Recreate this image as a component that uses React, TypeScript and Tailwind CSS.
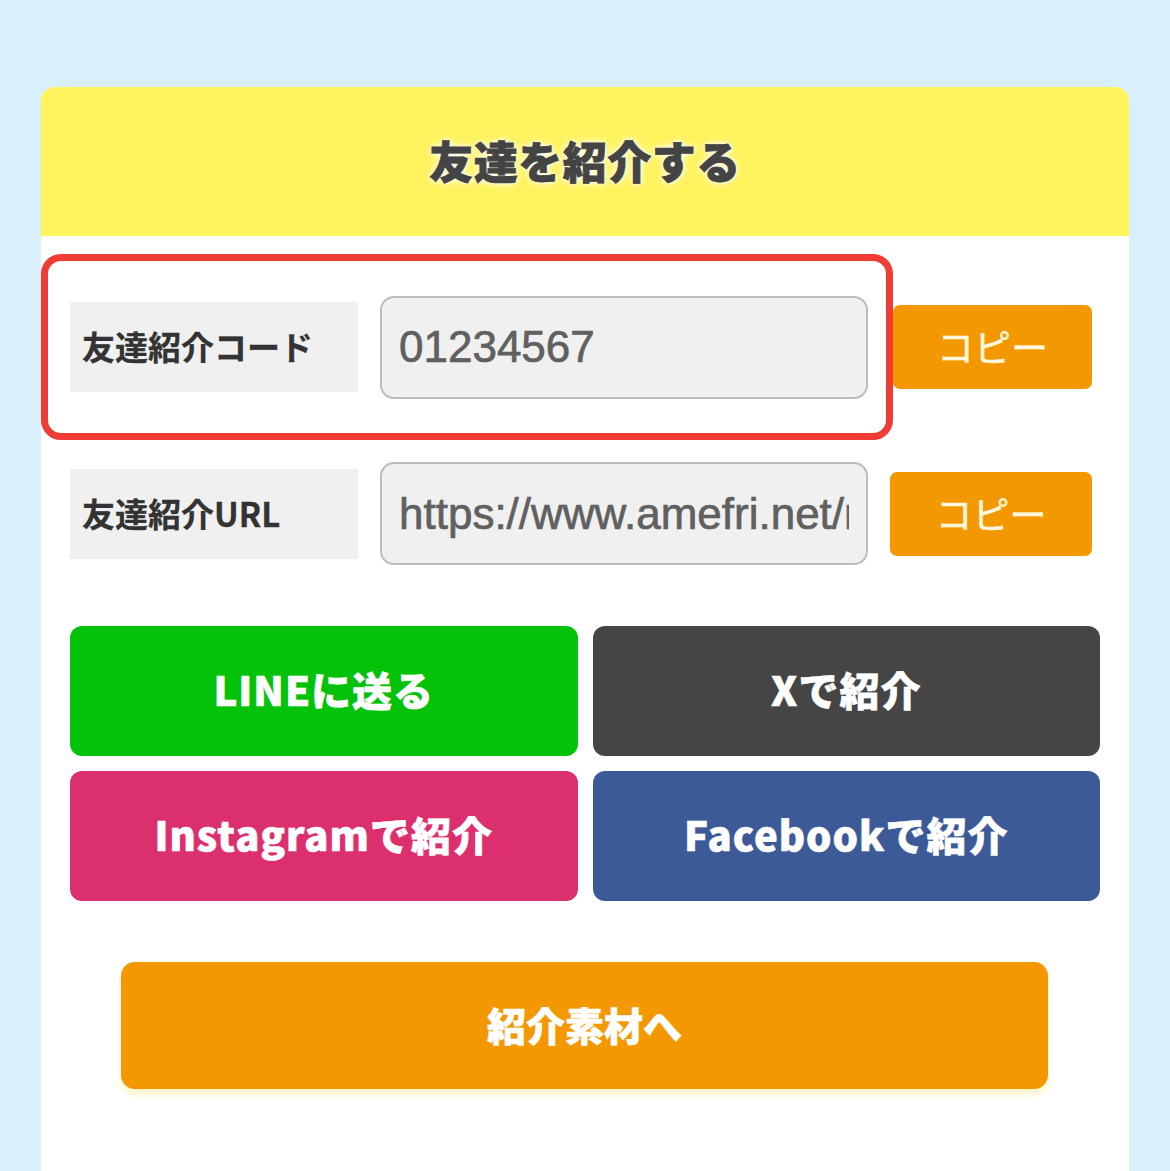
import { useState } from 'react';

const jp = "font-['Noto_Sans_CJK_JP','Noto_Sans',sans-serif]";

const shareButtons = [
  { label: 'LINEに送る', color: 'bg-[#04c20a]' },
  { label: 'Xで紹介', color: 'bg-[#454545]' },
  { label: 'Instagramで紹介', color: 'bg-[#dc306e]' },
  { label: 'Facebookで紹介', color: 'bg-[#3c5a98]' },
];

const App = () => {
  const [code] = useState('01234567');
  const [url] = useState('https://www.amefri.net/referral?code=01234567');

  return (
    <div className={`min-h-screen bg-[#d9f0fc] px-[41px] pt-[87px] ${jp}`}>
      <div className="bg-white rounded-t-[14px] overflow-hidden pb-[120px]">
        {/* Header */}
        <div className="h-[149px] bg-[#fff35e] flex items-center justify-center pb-[4px]">
          <h1 className="text-[44px] font-black text-[#444] tracking-[0.5px] [-webkit-text-stroke:0.8px_#444] [text-shadow:0_0_8px_#fff,0_0_4px_#fff,0_0_2px_#fff]">
            友達を紹介する
          </h1>
        </div>

        <div className="px-[29px] pt-[18px]">
          {/* Code row */}
          <div className="relative flex items-center h-[186px]">
            <div className="absolute top-0 bottom-0 left-[-29px] w-[852px] border-[7px] border-[#ef3d36] rounded-[20px] pointer-events-none" />
            <div className="w-[288px] h-[90px] bg-[#f0f0f0] flex items-center pl-[12px] text-[33px] font-bold text-[#333] [-webkit-text-stroke:0.3px_#333]">
              友達紹介コード
            </div>
            <input
              readOnly
              value={code}
              className="ml-[22px] w-[488px] h-[103px] bg-[#f0f0f0] border-2 border-[#bdbdbd] rounded-[14px] px-[17px] text-[44px] text-[#606060] font-['Liberation_Sans',Arial,sans-serif] [-webkit-text-stroke:0.7px_#606060] outline-none"
            />
            <button className="ml-[25px] w-[199px] h-[84px] bg-[#f39800] rounded-[7px] text-[37px] text-[#fff6dc] [-webkit-text-stroke:0.5px_#fff6dc]">
              コピー
            </button>
          </div>

          {/* URL row */}
          <div className="flex items-center h-[103px] mt-[22px]">
            <div className="w-[288px] h-[90px] bg-[#f0f0f0] flex items-center pl-[12px] text-[33px] font-bold text-[#333] [-webkit-text-stroke:0.3px_#333]">
              友達紹介URL
            </div>
            <input
              readOnly
              value={url}
              className="ml-[22px] w-[488px] h-[103px] bg-[#f0f0f0] border-2 border-[#bdbdbd] rounded-[14px] px-[17px] text-[44px] text-[#606060] font-['Liberation_Sans',Arial,sans-serif] [-webkit-text-stroke:0.7px_#606060] outline-none"
            />
            <button className="ml-[22px] w-[202px] h-[84px] bg-[#f39800] rounded-[7px] text-[37px] text-[#fff6dc] [-webkit-text-stroke:0.5px_#fff6dc]">
              コピー
            </button>
          </div>

          {/* Share buttons */}
          <div className="grid grid-cols-2 gap-[15px] mt-[61px]">
            {shareButtons.map((b) => (
              <button
                key={b.label}
                className={`${b.color} h-[130px] rounded-[12px] text-white text-[40px] font-black tracking-[1px] flex items-center justify-center pb-[5px] [-webkit-text-stroke:0.6px_white]`}
              >
                {b.label}
              </button>
            ))}
          </div>

          {/* Materials */}
          <button className="mt-[61px] mx-[51px] w-[927px] h-[127px] bg-[#f39800] rounded-[14px] text-white text-[39px] font-black flex items-center justify-center pb-[3px] [-webkit-text-stroke:0.6px_white] shadow-[0_6px_6px_rgba(255,235,150,0.5)]">
            紹介素材へ
          </button>
        </div>
      </div>
    </div>
  );
};

export default App;
